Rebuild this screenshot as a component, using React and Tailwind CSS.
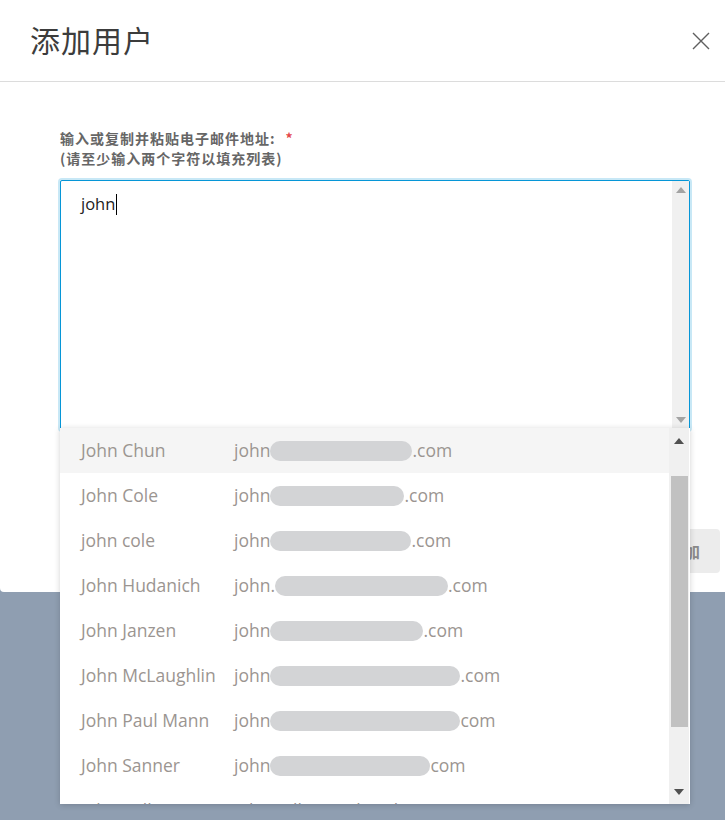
import React from 'react';

const users = [
  { name: 'John Chun', pre: 'john', bar: 142, post: '.com', active: true },
  { name: 'John Cole', pre: 'john', bar: 134, post: '.com' },
  { name: 'john cole', pre: 'john', bar: 141, post: '.com' },
  { name: 'John Hudanich', pre: 'john.', bar: 173, post: '.com' },
  { name: 'John Janzen', pre: 'john', bar: 153, post: '.com' },
  { name: 'John McLaughlin', pre: 'john', bar: 190, post: '.com' },
  { name: 'John Paul Mann', pre: 'john', bar: 190, post: 'com' },
  { name: 'John Sanner', pre: 'john', bar: 160, post: 'com' },
  { name: 'John Williams', pre: 'john.williams@bentley.com', bar: 0, post: '' },
];

const ArrowUp = ({ className }) => (
  <svg width="10" height="6" viewBox="0 0 10 6" className={className}>
    <path d="M5 0 L10 6 L0 6 Z" fill="currentColor" />
  </svg>
);

const ArrowDown = ({ className }) => (
  <svg width="10" height="6" viewBox="0 0 10 6" className={className}>
    <path d="M0 0 L10 0 L5 6 Z" fill="currentColor" />
  </svg>
);

const App = () => {
  return (
    <div className="relative h-[820px] w-full overflow-hidden bg-[#8f9eb1] font-['Open_Sans','Noto_Sans_CJK_SC',sans-serif]">
      {/* modal */}
      <div className="flex h-[592px] w-full flex-col rounded-bl-[4px] bg-white">
        <div className="flex h-[82px] items-center justify-between border-b border-[#dcdcdc] pl-[30px] pr-[12px]">
          <h1 className="pb-[4px] font-['Noto_Sans_CJK_SC',sans-serif] text-[30px] font-normal leading-none tracking-[1px] text-[#3c3c3c]">
            添加用户
          </h1>
          <button className="flex h-[24px] w-[24px] items-center justify-center text-[#5f5f5f]">
            <svg width="18" height="18" viewBox="0 0 18 18">
              <path d="M1 1 L17 17 M17 1 L1 17" stroke="currentColor" strokeWidth="1.4" fill="none" />
            </svg>
          </button>
        </div>

        <div className="pl-[60px] pt-[46px]">
          <label className="block font-['Noto_Sans_CJK_SC',sans-serif] text-[14px] font-bold leading-[20px] tracking-[1px] text-[#666666]">
            输入或复制并粘贴电子邮件地址:
            <span className="ml-[10px] text-[#e4484a]">*</span>
            <br />
            (请至少输入两个字符以填充列表)
          </label>

          <div className="relative mt-[12px] h-[250px] w-[630px] rounded-[2px] border border-[#0696d7] bg-white shadow-[0_0_0_2px_rgba(6,150,215,0.22)]">
            <div className="flex items-center pl-[20px] pt-[11px] text-[16.5px] leading-[24px] text-[#222]">
              john
              <span className="ml-[1px] inline-block h-[21px] w-[1px] bg-black" />
            </div>
            <div className="absolute bottom-0 right-0 top-0 flex w-[17px] flex-col items-center justify-between bg-[#f0f0f0] py-[6px] text-[#a3a3a3]">
              <ArrowUp />
              <ArrowDown />
            </div>
          </div>
        </div>

        <div className="mt-auto flex justify-end pb-[19px] pr-[5px]">
          <button className="h-[44px] rounded-[4px] bg-[#ececec] px-[20px] font-['Noto_Sans_CJK_SC',sans-serif] text-[16px] font-bold text-[#8a8a8a]">
            添加
          </button>
        </div>
      </div>

      {/* autocomplete dropdown */}
      <div className="absolute left-[60px] top-[428px] h-[376px] w-[630px] overflow-hidden bg-white shadow-[0_1px_6px_rgba(0,0,0,0.18)]">
        <div className="pr-[21px]">
          {users.map((u) => (
            <div
              key={u.name}
              className={`flex h-[45px] items-center pl-[21px] text-[17.5px] text-[#9b9591] ${u.active ? 'bg-[#f5f5f5]' : ''}`}
            >
              <span className="w-[153px] shrink-0 whitespace-nowrap">{u.name}</span>
              <span className="flex items-center whitespace-nowrap">
                {u.pre}
                {u.bar > 0 && (
                  <span
                    className="inline-block h-[20px] rounded-full bg-[#d3d4d6]"
                    style={{ width: u.bar }}
                  />
                )}
                {u.post}
              </span>
            </div>
          ))}
        </div>
        <div className="absolute bottom-0 right-[1px] top-0 flex w-[20px] flex-col items-center bg-[#f0f0f0] text-[#505050]">
          <div className="pt-[10px]">
            <ArrowUp />
          </div>
          <div className="mt-[32px] h-[251px] w-[17px] bg-[#c1c1c1]" />
          <div className="mt-auto pb-[9px]">
            <ArrowDown />
          </div>
        </div>
      </div>
    </div>
  );
};

export default App;
